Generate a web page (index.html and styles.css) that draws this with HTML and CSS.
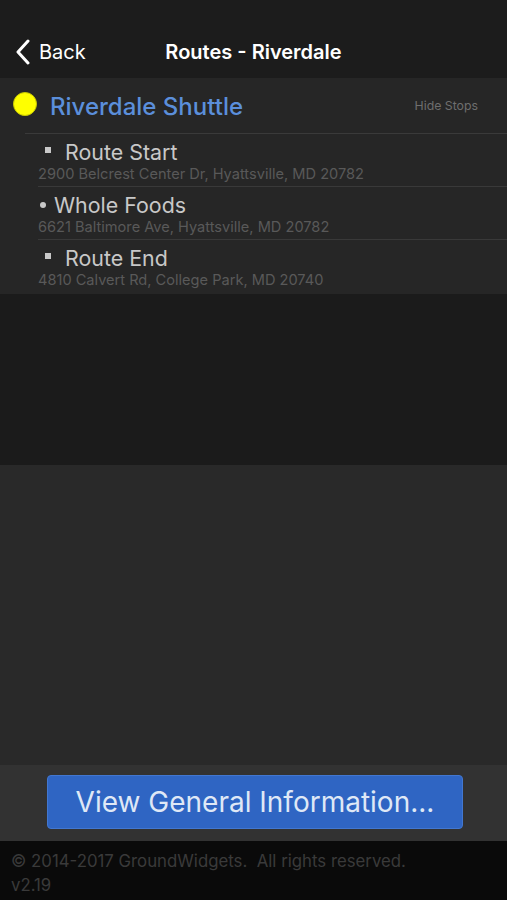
FILE: index.html
```html
<!DOCTYPE html>
<html lang="en">
<head>
    <meta charset="UTF-8">
    <title>Routes - Riverdale</title>
    <link rel="stylesheet" href="styles.css">
</head>
<body>

<div class="screen">
    <header class="navbar">
        <a class="back" href="#">
            <svg class="chevron" width="16" height="26" viewBox="0 0 16 26">
                <path d="M13 2 L3 13 L13 24" fill="none" stroke="#fff" stroke-width="3" stroke-linecap="round" stroke-linejoin="round"/>
            </svg>
            <span>Back</span>
        </a>
        <h1 class="nav-title">Routes - Riverdale</h1>
    </header>

    <section class="route">
        <div class="route-head">
            <span class="route-dot"></span>
            <span class="route-name">Riverdale Shuttle</span>
            <span class="route-toggle">Hide Stops</span>
        </div>
        <ul class="stops">
            <li class="stop">
                <div class="stop-name"><span class="bullet square"></span>Route Start</div>
                <div class="stop-addr">2900 Belcrest Center Dr, Hyattsville, MD 20782</div>
            </li>
            <li class="stop">
                <div class="stop-name"><span class="bullet round"></span>Whole Foods</div>
                <div class="stop-addr">6621 Baltimore Ave, Hyattsville, MD 20782</div>
            </li>
            <li class="stop">
                <div class="stop-name"><span class="bullet square"></span>Route End</div>
                <div class="stop-addr">4810 Calvert Rd, College Park, MD 20740</div>
            </li>
        </ul>
    </section>

    <div class="empty-dark"></div>
    <div class="empty-light"></div>

    <div class="action-bar">
        <button class="info-btn">View General Information...</button>
    </div>

    <footer class="footer">
        <div>&copy; 2014-2017 GroundWidgets.&nbsp; All rights reserved.</div>
        <div>v2.19</div>
    </footer>
</div>

</body>
</html>
```

FILE: styles.css
```css
* {
    box-sizing: border-box;
}
body {
    margin: 0;
    background: #0a0a0a;
    font-family: 'Inter', 'Roboto', sans-serif;
}
.screen {
    width: 507px;
    height: 900px;
    display: flex;
    flex-direction: column;
    overflow: hidden;
}
.navbar {
    height: 78px;
    background: #1c1c1c;
    display: flex;
    align-items: flex-end;
    justify-content: center;
    padding-bottom: 14px;
    position: relative;
}
.back {
    position: absolute;
    left: 15px;
    bottom: 13px;
    display: flex;
    align-items: center;
    gap: 8px;
    color: #fff;
    text-decoration: none;
    font-size: 20px;
}
.nav-title {
    margin: 0;
    color: #fff;
    font-size: 20px;
    font-weight: 600;
}
.route {
    background: #262626;
}
.route-head {
    height: 55px;
    display: flex;
    align-items: center;
    padding: 1px 29px 0 13px;
}
.route-dot {
    width: 24px;
    height: 24px;
    border-radius: 50%;
    background: #ffff00;
    border: 1px solid #c8c800;
    margin-top: -4px;
}
.route-name {
    margin-left: 13px;
    color: #5b8fdb;
    font-size: 24px;
    font-weight: 500;
    flex: 1;
}
.route-toggle {
    color: #6e6e6e;
    font-size: 12.3px;
    margin-bottom: 2px;
}
.stops {
    list-style: none;
    margin: 0 0 0 25px;
    padding: 0;
    border-top: 1px solid #3a3a3a;
}
.stop {
    margin-left: 13px;
    height: 53px;
    padding-top: 5px;
    border-bottom: 1px solid #393939;
}
.stop:last-child {
    height: 54px;
    border-bottom: none;
}
.stop-name {
    display: flex;
    align-items: center;
    color: #c8c8c8;
    font-size: 21.4px;
    line-height: 26px;
}
.bullet {
    background: #c8c8c8;
}
.bullet.square {
    width: 6px;
    height: 6px;
    margin: 0 14px 4px 7px;
}
.bullet.round {
    width: 6px;
    height: 6px;
    border-radius: 50%;
    margin: 0 8px 0 2px;
}
.stop-addr {
    color: #595959;
    font-size: 14.6px;
    line-height: 18px;
}
.empty-dark {
    height: 171px;
    background: #1b1b1b;
}
.empty-light {
    height: 300px;
    background: #292929;
}
.action-bar {
    height: 76px;
    background: #323232;
    display: flex;
    justify-content: center;
    padding-top: 10px;
}
.info-btn {
    width: 416px;
    height: 54px;
    margin-left: 3px;
    background: #2f65c3;
    border: 1px solid #4277d0;
    border-radius: 4px;
    color: #dfe8f6;
    font-family: inherit;
    font-size: 28px;
}
.footer {
    flex: 1;
    background: #0a0a0a;
    color: #3a3a3a;
    font-size: 16.8px;
    line-height: 24px;
    padding: 8px 11px 0;
}
```
